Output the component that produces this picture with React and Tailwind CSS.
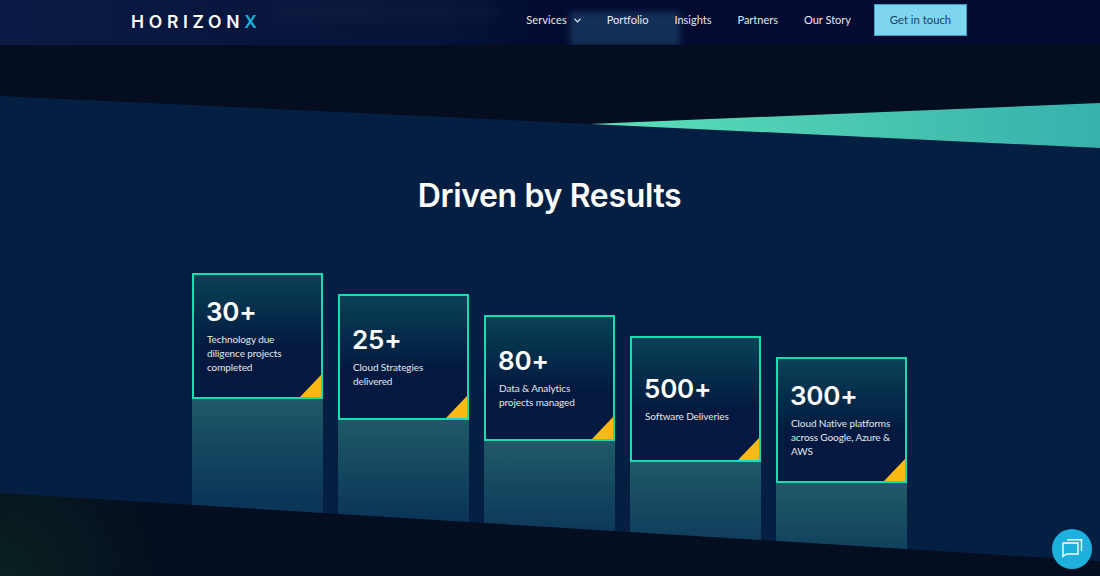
import React from "react";
import { FiChevronDown } from "react-icons/fi";

const stats = [
  { value: "30+", label: ["Technology due", "diligence projects", "completed"], offset: "mt-0" },
  { value: "25+", label: ["Cloud Strategies", "delivered"], offset: "mt-[21px]" },
  { value: "80+", label: ["Data & Analytics", "projects managed"], offset: "mt-[42px]" },
  { value: "500+", label: ["Software Deliveries"], offset: "mt-[63px]" },
  { value: "300+", label: ["Cloud Native platforms", "across Google, Azure &", "AWS"], offset: "mt-[84px]" },
];

const links = ["Portfolio", "Insights", "Partners", "Our Story"];

const Backdrop = () => (
  <svg className="absolute inset-0 w-full h-full" viewBox="0 0 1100 576">
    <defs>
      <linearGradient id="wedge" x1="590" y1="0" x2="1100" y2="0" gradientUnits="userSpaceOnUse">
        <stop offset="0" stopColor="#5ce0b8" />
        <stop offset="1" stopColor="#38b0ac" />
      </linearGradient>
    </defs>
    <polygon points="0,96 1100,148 1100,576 0,576" fill="#051f42" />
    <polygon points="590,124 1100,103 1100,148" fill="url(#wedge)" />
  </svg>
);

const Foreground = () => (
  <svg className="absolute inset-0 w-full h-full pointer-events-none" viewBox="0 0 1100 576">
    <defs>
      <radialGradient id="glow" cx="0" cy="576" r="170" gradientUnits="userSpaceOnUse">
        <stop offset="0" stopColor="#08211f" />
        <stop offset="1" stopColor="#050d20" />
      </radialGradient>
    </defs>
    <polygon points="0,493 1100,561 1100,576 0,576" fill="url(#glow)" />
  </svg>
);

const StatCard = ({ value, label, offset }) => (
  <div className={`w-[131px] shrink-0 ${offset}`}>
    <div className="relative h-[126px] border-2 border-[#1bdcb0] bg-gradient-to-b from-[#0b4256] to-[#03193f] to-60% flex flex-col justify-center pl-[13px] pb-[2px]">
      <div className="-ml-[1px] font-['Inter',sans-serif] text-[26px] leading-[30px] font-semibold text-white tracking-[-0.2px]">{value}</div>
      <div className="mt-[5px] text-[10px] leading-[14px] text-[#e4e8ee] tracking-[-0.1px]">
        {label.map((line) => (
          <div key={line}>{line}</div>
        ))}
      </div>
      {/* corner flag */}
      <div className="absolute right-0 bottom-0 w-[21px] h-[22px] bg-[#fdb913] [clip-path:polygon(100%_0,100%_100%,0_100%)]"></div>
    </div>
    <div className="h-[160px] bg-gradient-to-b from-[#1f5a68] to-[#0c3658] to-60%"></div>
  </div>
);

const App = () => {
  return (
    <div className="relative w-[1100px] h-[576px] overflow-hidden bg-[#050d20] font-['Lato','Liberation_Sans',sans-serif]">
      <Backdrop />

      <main className="relative pt-[45px]">
        <h2 className="mt-[132px] text-center font-['Inter',sans-serif] text-[32px] leading-[38px] font-semibold text-white tracking-[-0.35px] pr-[1px]">
          Driven by Results
        </h2>
        <div className="mt-[58px] flex justify-center gap-[15px] pr-[1px]">
          {stats.map((s) => (
            <StatCard key={s.value} {...s} />
          ))}
        </div>
      </main>

      <Foreground />

      {/* HEADER */}
      <header className="absolute top-0 left-0 right-0 h-[45px] overflow-hidden bg-gradient-to-r from-[#0a1a44] via-[#061338] to-[#030b30] via-40% to-50%">
        {/* blurred page content showing through */}
        <div className="absolute left-[270px] top-0 w-[230px] h-[24px] bg-white/[0.02] blur-[6px]"></div>
        <div className="absolute left-[570px] top-[12px] w-[110px] h-[34px] bg-[#143058] blur-[3px]"></div>
        <div className="relative flex items-center h-full pl-[131px]">
          <span className="font-['Inter',sans-serif] text-[17.5px] font-semibold tracking-[4.7px] text-white">
            HORIZON<span className="text-[#1cb0dc]">X</span>
          </span>
          <nav className="flex items-center gap-[26px] ml-auto text-[11px] text-[#e6e8ee] mr-[23px] -mt-[5px]">
            <span className="flex items-center gap-[5px] -mr-[2px] tracking-[0.1px]">
              Services <FiChevronDown size={11} strokeWidth={3} />
            </span>
            {links.map((l) => (
              <span key={l}>{l}</span>
            ))}
          </nav>
          <button className="mr-[133px] -mt-[5px] w-[93px] h-[32px] bg-[#7dd5f0] text-[#1f4260] text-[11.3px] border border-[#3f9cc4]">
            Get in touch
          </button>
        </div>
      </header>

      {/* CHAT BUBBLE */}
      <button className="absolute left-[1052px] top-[529px] w-[40px] h-[40px] rounded-full bg-[#1cb0dc] flex items-center justify-center">
        <svg width="22" height="22" viewBox="0 0 22 22" fill="none" stroke="white" strokeWidth="1.4">
          <path d="M2 5h15v11H5.5L2 18.5z" strokeLinejoin="miter" />
          <path d="M6 1.7h14.5V13" />
        </svg>
      </button>
    </div>
  );
};

export default App;
